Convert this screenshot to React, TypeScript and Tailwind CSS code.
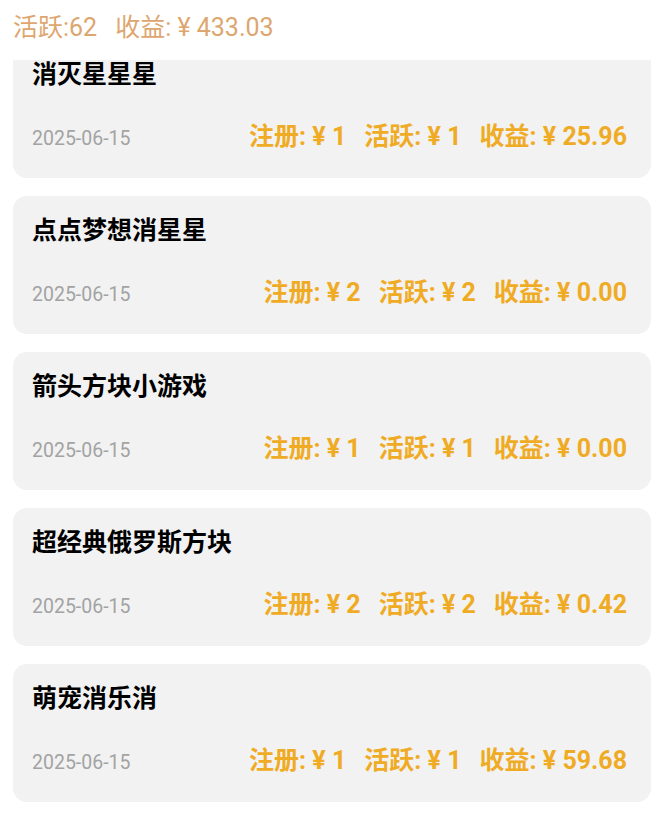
const games = [
  { name: "消灭星星星", reg: "1", act: "1", income: "25.96" },
  { name: "点点梦想消星星", reg: "2", act: "2", income: "0.00" },
  { name: "箭头方块小游戏", reg: "1", act: "1", income: "0.00" },
  { name: "超经典俄罗斯方块", reg: "2", act: "2", income: "0.42" },
  { name: "萌宠消乐消", reg: "1", act: "1", income: "59.68" },
];

const font = { fontFamily: 'Roboto, "Noto Sans CJK SC", sans-serif' };

export default function App() {
  return (
    <div className="w-[652px] h-[818px] bg-white overflow-hidden flex flex-col" style={font}>
      {/* sticky summary bar */}
      <div className="h-[60px] shrink-0 flex items-center pl-[13px] pb-[5px] text-[25px] text-[#dea66f] bg-white z-10">
        <span>活跃:62</span>
        <span className="ml-[18px]">收益: ¥ 433.03</span>
      </div>

      <div className="flex-1 overflow-hidden">
        <div className="flex flex-col gap-[18px] mt-[-20px] ml-[13px] mr-[1px]">
          {games.map((g) => (
            <div key={g.name} className="h-[138px] rounded-[14px] bg-[#f2f2f2] pl-[19px] pr-[24px] pt-[19px] flex flex-col">
              <div className="text-[25px] font-bold text-black leading-[32px]">{g.name}</div>
              <div className="mt-[27px] flex items-baseline justify-between">
                <span className="text-[19.5px] text-[#a3a3a3]">2025-06-15</span>
                <span className="text-[25px] font-bold text-[#f0ab25] flex gap-[18px]">
                  <span>注册: ¥ {g.reg}</span>
                  <span>活跃: ¥ {g.act}</span>
                  <span>收益: ¥ {g.income}</span>
                </span>
              </div>
            </div>
          ))}
        </div>
      </div>
    </div>
  );
}
